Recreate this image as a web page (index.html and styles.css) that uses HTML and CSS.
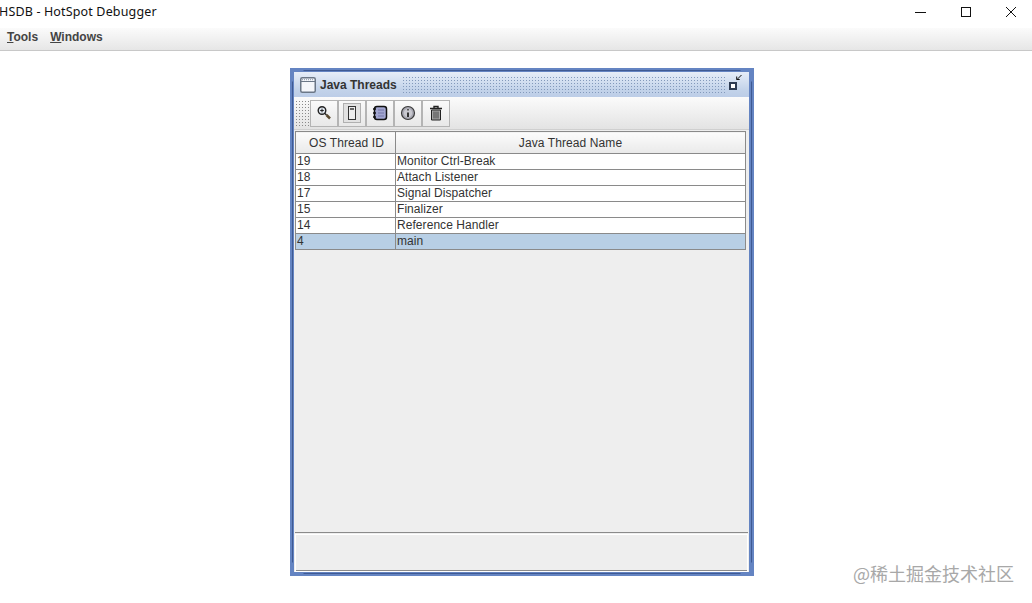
FILE: index.html
```html
<!DOCTYPE html>
<html lang="en">
<head>
<meta charset="utf-8">
<title>HSDB - HotSpot Debugger</title>
<link rel="stylesheet" href="styles.css">
</head>
<body>
<div class="app">
  <header class="titlebar">
    <span class="app-title">HSDB - HotSpot Debugger</span>
    <div class="win-controls">
      <svg width="12" height="12" viewBox="0 0 12 12"><path d="M0 6.500H11" stroke="#111" fill="none"/></svg>
      <svg width="12" height="12" viewBox="0 0 12 12"><rect x="1.500" y="1.500" width="9" height="9" stroke="#111" fill="none"/></svg>
      <svg width="12" height="12" viewBox="0 0 12 12"><path d="M1 1L11 11M11 1L1 11" stroke="#111" fill="none"/></svg>
    </div>
  </header>
  <nav class="menubar">
    <span class="menu"><u>T</u>ools</span>
    <span class="menu"><u>W</u>indows</span>
  </nav>
  <main class="desktop">
    <section class="frame">
      <div class="frame-title">
        <svg class="frame-icon" width="16" height="16" viewBox="0 0 16 16"><rect x="0.750" y="0.750" width="14.500" height="14.500" rx="1.500" fill="#f4f6fa" stroke="#6b7787" stroke-width="1.500"/><path d="M2 2.700H14" stroke="#8b98aa" stroke-dasharray="1 1"/><path d="M1 4.500H15" stroke="#6b7787"/></svg>
        <span class="frame-name">Java Threads</span>
        <div class="dots"></div>
        <svg class="frame-max" width="16" height="18" viewBox="0 0 16 18"><path d="M13.500 1L9 5.500M8.700 2.500V5.500H11.700" stroke="#111" fill="none"/><rect x="2" y="9" width="6" height="6" fill="#fff" stroke="#2c3a52" stroke-width="2"/></svg>
      </div>
      <div class="toolbar">
        <div class="grip"></div>
        <button class="tool"><svg width="16" height="16" viewBox="0 0 16 16"><circle cx="6" cy="5.500" r="3.800" fill="#dfe6ee" stroke="#222" stroke-width="1.400"/><path d="M4.200 5.500H7.800M6 3.700V7.300" stroke="#222"/><path d="M9 8.500L10.500 10" stroke="#222" stroke-width="1.500"/><path d="M10.500 10L14 13.500" stroke="#5a4a30" stroke-width="2.500"/></svg></button>
        <button class="tool"><svg width="18" height="20" viewBox="0 0 18 20"><rect x="0.500" y="0.500" width="17" height="19" fill="#e2e2e2" stroke="#b0b0b0"/><rect x="5.500" y="3.500" width="7" height="13" fill="#ececec" stroke="#333"/><path d="M7 6H11" stroke="#666" stroke-width="2"/></svg></button>
        <button class="tool"><svg width="16" height="16" viewBox="0 0 16 16"><rect x="2.500" y="1.500" width="12" height="13" rx="2.500" fill="#a2a6d0" stroke="#111" stroke-width="1.500"/><path d="M1 4H4M1 8H4M1 12H4" stroke="#111" stroke-width="1.500"/><path d="M6 5H12M6 8H12M6 11H12" stroke="#7477a8"/></svg></button>
        <button class="tool"><svg width="16" height="16" viewBox="0 0 16 16"><circle cx="8" cy="8" r="6.500" fill="#a9a9b3" stroke="#3a3a3a" stroke-width="1.200"/><circle cx="8" cy="8" r="4.200" fill="#c9c9d0"/><path d="M8 7.500V12" stroke="#333" stroke-width="2"/><path d="M8 4V5.500" stroke="#333" stroke-width="1.500"/></svg></button>
        <button class="tool"><svg width="16" height="16" viewBox="0 0 16 16"><path d="M2 3.500H14M6 3V1.500H10V3" stroke="#222" stroke-width="1.400" fill="none"/><path d="M3.500 5H12.500V15H3.500Z" fill="#a8a8a8" stroke="#222"/><path d="M6 6.500V13.500M8 6.500V13.500M10 6.500V13.500" stroke="#444"/></svg></button>
      </div>
      <div class="table-pane">
        <table class="threads">
          <thead>
            <tr><th class="col-id">OS Thread ID</th><th>Java Thread Name</th></tr>
          </thead>
          <tbody>
            <tr><td>19</td><td>Monitor Ctrl-Break</td></tr>
            <tr><td>18</td><td>Attach Listener</td></tr>
            <tr><td>17</td><td>Signal Dispatcher</td></tr>
            <tr><td>15</td><td>Finalizer</td></tr>
            <tr><td>14</td><td>Reference Handler</td></tr>
            <tr class="selected"><td>4</td><td>main</td></tr>
          </tbody>
        </table>
      </div>
      <div class="status"></div>
    </section>
  </main>
  <div class="watermark">@稀土掘金技术社区</div>
</div>
</body>
</html>
```

FILE: styles.css
```css
* { box-sizing: border-box; }
html, body { margin: 0; height: 100%; background: #fff; overflow: hidden; }
.app { position: relative; display: flex; flex-direction: column; height: 603px; font-family: "Liberation Sans", Arial, sans-serif; color: #333; }

.titlebar { display: flex; justify-content: space-between; align-items: center; height: 28px; padding-bottom: 5px; background: #fff; }
.app-title { font-family: "Noto Sans", "Open Sans", sans-serif; font-size: 12.500px; letter-spacing: 0.150px; color: #111; margin-left: -1px; }
.win-controls { display: flex; gap: 33px; margin-right: 15px; }

.menubar { display: flex; gap: 12px; align-items: center; height: 23px; padding: 0 0 5px 7px; background: linear-gradient(#fbfbfb, #e6e6e6); border-bottom: 1px solid #c8c8c8; }
.menu { font-size: 12px; font-weight: bold; color: #444; }

.desktop { flex: 1; padding: 17px 0 0 290px; }

.frame { position: relative; display: flex; flex-direction: column; width: 464px; height: 508px; border: 4px solid #6484c2; border-right-width: 5px; background: #eeeeee; }
.frame::after { content: ""; position: absolute; inset: -2px -3px -2px -2px; border: 1px solid #3f5a93; pointer-events: none; clip-path: polygon(12px 0, calc(100% - 12px) 0, 100% 12px, 100% calc(100% - 12px), calc(100% - 12px) 100%, 12px 100%, 0 calc(100% - 12px), 0 12px); }

.frame-title { display: flex; align-items: center; height: 25px; padding: 0 2px 0 6px; background: linear-gradient(#e6edf8, #c3d3ea 70%, #bccde7); }
.frame-icon { flex: none; }
.frame-name { margin-left: 4px; font-size: 12px; font-weight: bold; color: #333; white-space: nowrap; }
.dots { flex: 1; height: 17px; margin: 0 1px 0 5px; background-image: radial-gradient(#8399bb 0.700px, transparent 0.800px); background-size: 3px 3px; }
.frame-max { flex: none; margin: -3px 3px 0 0; }

.toolbar { display: flex; align-items: center; height: 33px; padding: 0 0 0 1px; background: linear-gradient(#fbfbfb, #e3e3e3); border-bottom: 1px solid #cfcfcf; }
.grip { width: 15px; height: 27px; background-image: radial-gradient(#8a8a8a 0.700px, transparent 0.800px); background-size: 3px 3px; }
.tool { display: flex; align-items: center; justify-content: center; width: 28px; height: 27px; padding: 0; background: linear-gradient(#fafafa, #e8e8e8); border: 1px solid #b4b4b4; }

.table-pane { flex: 1; padding-top: 1px; border-bottom: 1px solid #8a8a8a; margin: 0 1px; }
.threads { width: 451px; border-collapse: collapse; table-layout: fixed; font-size: 12px; color: #333; }
.threads th { height: 22px; padding: 0; font-weight: normal; letter-spacing: 0.100px; text-align: center; background: linear-gradient(#fcfcfc, #e9e9e9); border: 1px solid #8a8a8a; }
.threads .col-id { width: 100px; padding-left: 2px; }
.threads td { height: 16px; padding: 0 0 0 1px; line-height: 14px; letter-spacing: 0.060px; vertical-align: top; background: #fff; border: 1px solid #8a8a8a; white-space: nowrap; }
.threads .selected td { background: #b8cfe5; }

.status { flex: none; height: 38px; margin: 1px 1px 0; background: #eeeeee; border: 1px solid #fff; box-shadow: inset 0 -1px #8a8a8a; }

.watermark { position: absolute; right: 18px; bottom: 17px; font-family: "Noto Sans CJK SC", "Noto Sans", sans-serif; font-size: 18px; color: #a8a8a8; white-space: nowrap; }
```
